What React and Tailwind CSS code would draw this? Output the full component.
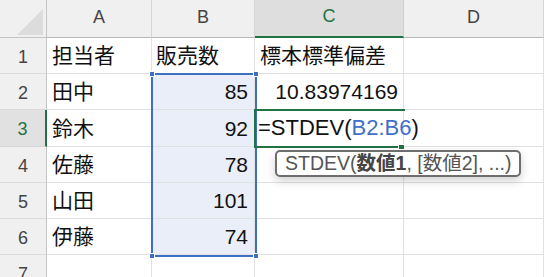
import React from 'react';

const COLS = ['A', 'B', 'C', 'D'];
const ROW_H = ['h-[36px]', 'h-[36px]', 'h-[37px]', 'h-[36px]', 'h-[36px]', 'h-[36px]', 'h-[36px]'];

// row data: [A, B, C]
const ROWS = [
    ['担当者', '販売数', '標本標準偏差'],
    ['田中', '85', '10.83974169'],
    ['鈴木', '92', ''],
    ['佐藤', '78', ''],
    ['山田', '101', ''],
    ['伊藤', '74', ''],
    ['', '', ''],
];

const Cell = ({ children, className = '' }) => (
    <div className={`flex items-center border-r border-b border-[#e1e1e1] leading-none whitespace-nowrap ${className}`}>
        {children}
    </div>
);

const App = () => {
    return (
        <div className="relative w-[544px] h-[277px] overflow-hidden bg-white font-['Liberation_Sans','Noto_Sans_CJK_JP',sans-serif] text-[21px] text-[#111]">
            <div className="grid grid-cols-[47px_105px_103px_149px_140px]">
                {/* corner */}
                <div className="relative h-[38px] bg-[#f0f0f0] border-r border-b border-[#c4c4c4]">
                    <svg width="47" height="38" className="absolute inset-0">
                        <polygon points="17,35 43,9 43,35" fill="#dcdcdc" />
                    </svg>
                </div>
                {COLS.map((c) => (
                    <div
                        key={c}
                        className={
                            c === 'C'
                                ? 'h-[38px] flex items-center justify-center pb-[3px] bg-[#dedede] border-r border-[#cfcfcf] border-b-2 border-b-[#217346] text-[18px] text-[#217346]'
                                : 'h-[38px] flex items-center justify-center pb-[3px] bg-[#f0f0f0] border-r border-[#d6d6d6] border-b border-b-[#b8b8b8] text-[18px] text-[#444]'
                        }
                    >
                        {c}
                    </div>
                ))}

                {ROWS.map((row, i) => {
                    const n = i + 1;
                    const sel = n >= 2 && n <= 6;
                    let cClass = 'justify-end pr-[5px]';
                    if (n === 1) cClass = 'pl-[5px]';
                    if (n === 3) cClass = 'justify-start pl-[3px] overflow-visible';
                    return (
                        <React.Fragment key={n}>
                            <div
                                className={
                                    n === 3
                                        ? `${ROW_H[i]} flex items-center justify-center pt-[3px] bg-[#e1e1e1] border-r-2 border-r-[#217346] border-b border-b-[#d6d6d6] text-[18px] text-[#217346]`
                                        : `${ROW_H[i]} flex items-center justify-center pt-[3px] bg-[#f0f0f0] border-r border-r-[#c4c4c4] border-b border-b-[#dadada] text-[18px] text-[#444]`
                                }
                            >
                                {n}
                            </div>
                            <Cell className={`${ROW_H[i]} pl-[5px]`}>{row[0]}</Cell>
                            <Cell className={`${ROW_H[i]} ${n === 1 ? 'pl-[4px]' : 'justify-end pr-[6px]'} ${sel ? 'bg-[#e9eef8]' : ''}`}>
                                {row[1]}
                            </Cell>
                            <Cell className={`${ROW_H[i]} ${cClass}`}>
                                {n === 3 ? (
                                    <span className="relative z-10 text-[22px]">
                                        =STDEV(<span className="text-[#3f70c8]">B2:B6</span>)
                                    </span>
                                ) : (
                                    row[2]
                                )}
                            </Cell>
                            <Cell className={ROW_H[i]} />
                        </React.Fragment>
                    );
                })}
            </div>

            {/* selection B2:B6 */}
            <div className="absolute left-[151px] top-[73px] w-[106px] h-[184px] border-2 border-[#3d6fc6] pointer-events-none" />
            <div className="absolute left-[149px] top-[71px] w-[6px] h-[6px] bg-[#3d6fc6] border border-white" />
            <div className="absolute left-[253px] top-[71px] w-[6px] h-[6px] bg-[#3d6fc6] border border-white" />
            <div className="absolute left-[149px] top-[253px] w-[6px] h-[6px] bg-[#3d6fc6] border border-white" />
            <div className="absolute left-[253px] top-[253px] w-[6px] h-[6px] bg-[#3d6fc6] border border-white" />

            {/* active cell C3 */}
            <div className="absolute left-[254px] top-[109px] w-[151px] h-[39px] border-t-2 border-l-2 border-b-2 border-[#217346] pointer-events-none" />
            <div className="absolute left-[398px] top-[144px] w-[7px] h-[6px] bg-[#217346] border border-white" />

            {/* function tooltip */}
            <div className="absolute left-[275px] top-[150px] w-[246px] h-[27px] flex items-center pl-[8px] bg-white border-2 border-[#6e6e6e] rounded-[5px] shadow-[0_4px_10px_rgba(0,0,0,0.18)] text-[19.5px] text-[#555] leading-none whitespace-nowrap">
                STDEV(<span className="font-bold text-[#444]">数値1</span>, [数値2], ...)
            </div>
        </div>
    );
};

export default App;
